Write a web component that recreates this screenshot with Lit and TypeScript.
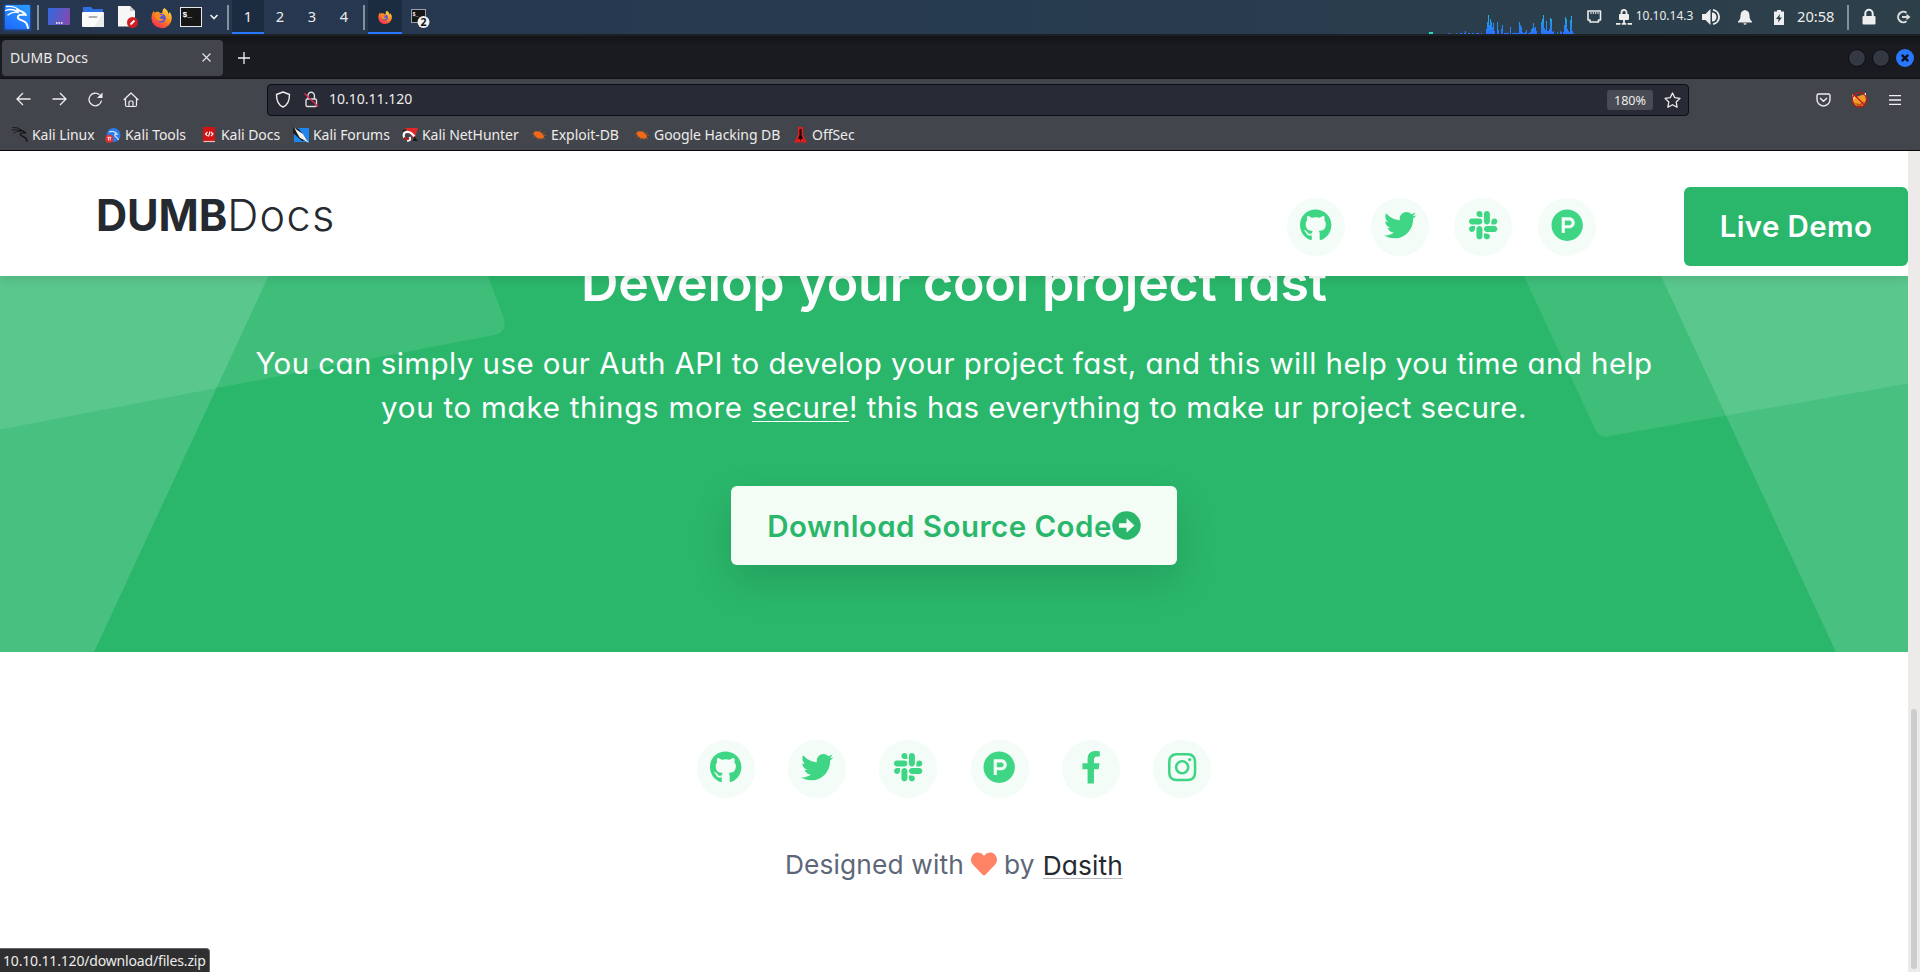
import { LitElement, html, css, svg } from "lit";
import { customElement } from "lit/decorators.js";

const GLYPHS: Record<string, { w: number; d: string }> = {
  github: { w: 496, d: "M165.9 397.4c0 2-2.3 3.6-5.2 3.6-3.3.3-5.6-1.3-5.6-3.6 0-2 2.3-3.6 5.2-3.6 3-.3 5.6 1.3 5.6 3.6zm-31.1-4.5c-.7 2 1.3 4.3 4.3 4.9 2.6 1 5.6 0 6.2-2s-1.3-4.3-4.3-5.2c-2.6-.7-5.5.3-6.2 2.3zm44.2-1.7c-2.9.7-4.9 2.6-4.6 4.9.3 2 2.9 3.3 5.9 2.6 2.9-.7 4.9-2.6 4.6-4.6-.3-1.9-3-3.2-5.9-2.9zM244.8 8C106.1 8 0 113.3 0 252c0 110.9 69.8 205.8 169.5 239.2 12.8 2.3 17.3-5.6 17.3-12.1 0-6.2-.3-40.4-.3-61.4 0 0-70 15-84.7-29.8 0 0-11.4-29.1-27.8-36.6 0 0-22.9-15.7 1.6-15.4 0 0 24.9 2 38.6 25.8 21.9 38.6 58.6 27.5 72.9 20.9 2.3-16 8.8-27.1 16-33.7-55.9-6.2-112.3-14.3-112.3-110.5 0-27.5 7.6-41.3 23.6-58.9-2.6-6.5-11.1-33.3 2.6-67.9 20.9-6.5 69 27 69 27 20-5.6 41.5-8.5 62.8-8.5s42.8 2.9 62.8 8.5c0 0 48.1-33.6 69-27 13.7 34.7 5.2 61.4 2.6 67.9 16 17.7 25.8 31.5 25.8 58.9 0 96.5-58.9 104.2-114.8 110.5 9.2 7.9 17 22.9 17 46.4 0 33.7-.3 75.4-.3 83.6 0 6.5 4.6 14.4 17.3 12.1C428.2 457.8 496 362.9 496 252 496 113.3 383.5 8 244.8 8z" },
  twitter: { w: 512, d: "M459.37 151.716c.325 4.548.325 9.097.325 13.645 0 138.72-105.583 298.558-298.558 298.558-59.452 0-114.68-17.219-161.137-47.106 8.447.974 16.568 1.299 25.34 1.299 49.055 0 94.213-16.568 130.274-44.832-46.132-.975-84.792-31.188-98.112-72.772 6.498.974 12.995 1.624 19.818 1.624 9.421 0 18.843-1.3 27.614-3.573-48.081-9.747-84.143-51.98-84.143-102.985v-1.299c13.969 7.797 30.214 12.67 47.431 13.319-28.264-18.843-46.781-51.005-46.781-87.391 0-19.492 5.197-37.36 14.294-52.954 51.655 63.675 129.3 105.258 216.365 109.807-1.624-7.797-2.599-15.918-2.599-24.04 0-57.828 46.782-104.934 104.934-104.934 30.213 0 57.502 12.67 76.67 33.137 23.715-4.548 46.456-13.32 66.599-25.34-7.798 24.366-24.366 44.833-46.132 57.827 21.117-2.273 41.584-8.122 60.426-16.243-14.292 20.791-32.161 39.308-52.628 54.253z" },
  slack: { w: 448, d: "M94.12 315.1c0 25.9-21.16 47.06-47.06 47.06S0 341 0 315.1c0-25.9 21.16-47.06 47.06-47.06h47.06v47.06zm23.72 0c0-25.9 21.16-47.06 47.06-47.06s47.06 21.16 47.06 47.06v117.84c0 25.9-21.16 47.06-47.06 47.06s-47.06-21.16-47.06-47.06V315.1zm47.06-188.98c-25.9 0-47.06-21.16-47.06-47.06S139 32 164.9 32s47.06 21.16 47.06 47.06v47.06H164.9zm0 23.72c25.9 0 47.06 21.16 47.06 47.06s-21.16 47.06-47.06 47.06H47.06C21.16 243.96 0 222.8 0 196.9s21.16-47.06 47.06-47.06H164.9zm188.98 47.06c0-25.9 21.16-47.06 47.06-47.06 25.9 0 47.06 21.16 47.06 47.06s-21.16 47.06-47.06 47.06h-47.06V196.9zm-23.72 0c0 25.9-21.16 47.06-47.06 47.06-25.9 0-47.06-21.16-47.06-47.06V79.06c0-25.9 21.16-47.06 47.06-47.06 25.9 0 47.06 21.16 47.06 47.06V196.9zM283.1 385.88c25.9 0 47.06 21.16 47.06 47.06 0 25.9-21.16 47.06-47.06 47.06-25.9 0-47.06-21.16-47.06-47.06v-47.06h47.06zm0-23.72c-25.9 0-47.06-21.16-47.06-47.06 0-25.9 21.16-47.06 47.06-47.06h117.84c25.9 0 47.06 21.16 47.06 47.06 0 25.9-21.16 47.06-47.06 47.06H283.1z" },
  producthunt: { w: 512, d: "M326.3 218.8c0 20.5-16.7 37.2-37.2 37.2h-70.3v-74.4h70.3c20.5 0 37.2 16.7 37.2 37.2zM504 256c0 137-111 248-248 248S8 393 8 256 119 8 256 8s248 111 248 248zm-128.1-37.2c0-47.9-38.9-86.8-86.8-86.8H169.2v248h49.6v-74.4h70.3c47.9 0 86.8-38.9 86.8-86.8z" },
  facebook: { w: 320, d: "M279.14 288l14.22-92.66h-88.91v-60.13c0-25.35 12.42-50.06 52.24-50.06h40.42V6.26S260.43 0 225.36 0c-73.22 0-121.08 44.38-121.08 124.72v70.62H22.89V288h81.39v224h100.17V288z" },
  instagram: { w: 448, d: "M224.1 141c-63.6 0-114.9 51.3-114.9 114.9s51.3 114.9 114.9 114.9S339 319.5 339 255.9 287.7 141 224.1 141zm0 189.6c-41.1 0-74.7-33.5-74.7-74.7s33.5-74.7 74.7-74.7 74.7 33.5 74.7 74.7-33.6 74.7-74.7 74.7zm146.4-194.3c0 14.9-12 26.8-26.8 26.8-14.9 0-26.8-12-26.8-26.8s12-26.8 26.8-26.8 26.8 12 26.8 26.8zm76.1 27.2c-1.7-35.9-9.9-67.7-36.2-93.9-26.2-26.2-58-34.4-93.9-36.2-37-2.1-147.9-2.1-184.9 0-35.8 1.7-67.6 9.9-93.9 36.1s-34.4 58-36.2 93.9c-2.1 37-2.1 147.9 0 184.9 1.7 35.9 9.9 67.7 36.2 93.9s58 34.4 93.9 36.2c37 2.1 147.9 2.1 184.9 0 35.9-1.7 67.7-9.9 93.9-36.2 26.2-26.2 34.4-58 36.2-93.9 2.1-37 2.1-147.8 0-184.8zM398.8 388c-7.8 19.6-22.9 34.7-42.6 42.6-29.5 11.7-99.5 9-132.1 9s-102.7 2.6-132.1-9c-19.6-7.8-34.7-22.9-42.6-42.6-11.7-29.5-9-99.5-9-132.1s-2.6-102.7 9-132.1c7.8-19.6 22.9-34.7 42.6-42.6 29.5-11.7 99.5-9 132.1-9s102.7-2.6 132.1 9c19.6 7.8 34.7 22.9 42.6 42.6 11.7 29.5 9 99.5 9 132.1s2.7 102.7-9 132.1z" },
};

const social = (name: string) => {
  const g = GLYPHS[name];
  return html`<a class="social"><svg width=${(32.4 * g.w) / 512} height="32.4" viewBox="0 0 ${g.w} 512"><path fill="#3ed684" d=${g.d}></path></svg></a>`;
};

const DRAGON = svg`<g fill="none" stroke-linecap="round" stroke-linejoin="round"><path d="M2 2.500C7 2 11.500 3 14.500 6M1 6.500C5 4.800 9.500 5.500 13.500 7.800M3.500 11C7 8 10.500 7.800 14 8.500" stroke-width="1.300"/><path d="M12.500 6C16 6.800 19 7.600 21.500 11L19.500 10.500L17 10.700C13 10.800 12.300 13.800 15 15.300C19 17.300 22.500 17 23.500 24" stroke-width="1.900"/></g>`;

const DRAGON_LOGO = html`<svg width="28" height="28" viewBox="0 0 28 28">
  <defs><filter id="glow" x="-30%" y="-30%" width="160%" height="160%"><feGaussianBlur stdDeviation="1.3"></feGaussianBlur></filter>
  <linearGradient id="kl" x1="0" y1="1" x2="0.6" y2="0"><stop offset="0" stop-color="#1f68ff"></stop><stop offset="1" stop-color="#2a96ff"></stop></linearGradient></defs>
  <rect x="1.5" y="2" width="26" height="25" fill="#1c6cf5" filter="url(#glow)" opacity=".8"></rect>
  <rect x="2" y="2" width="25" height="24" rx="1" fill="url(#kl)"></rect>
  <g stroke="#fff" transform="translate(1.5 1)">${DRAGON}</g></svg>`;

const firefox = (s: number, id: string) => html`<svg width=${s} height=${s} viewBox="0 0 22 22">
  <defs><linearGradient id=${id} x1=".85" y1=".05" x2=".25" y2="1"><stop offset="0" stop-color="#ffe14a"></stop><stop offset=".45" stop-color="#ff8a1f"></stop><stop offset="1" stop-color="#f5264e"></stop></linearGradient></defs>
  <path fill="url(#${id})" d="M14 1c3 2 4 4 4 6 1 0 1.400-1 1.400-2C21 7 22 9.500 21.700 12.300A10.600 10 0 0 1 .5 12C.5 8.500 1.500 6 3 4c.1 1 .4 1.500.8 2C5 5 6.500 5 8 5.200 9.500 5.200 9 6.200 9 6.200c1 .1 1.700.2 2.800.1C11.800 4 12.500 2 14 1z"/>
  <circle cx="10.800" cy="11.700" r="4.700" fill="#5b58d8"/>
  <path fill="#ff8b20" d="M4 7.500C6 6 8 6.500 9.500 8.300L12.500 8.500C12 10 10.500 10 9 10.500C9.500 12.500 11.500 13 13.500 12.300C12 15.500 7.500 15.500 6 12.500C5.200 11 5 9 4 7.500z"/></svg>`;

const BARS: [number, number][] = [[144,1],[150,1],[168,1],[180,1],[183,1],[192,1],[195,3],[204,1],[207,1],[216,1],[219,1],[228,1],[231,1],[234,1],[243,1],[258,5],[261,12],[264,19],[267,9],[270,15],[273,12],[276,7],[279,11],[282,3],[291,12],[294,4],[303,5],[306,9],[312,1],[315,1],[318,1],[321,1],[324,1],[330,7],[336,1],[339,1],[342,1],[345,1],[348,1],[351,1],[354,1],[357,12],[360,9],[363,7],[366,2],[369,1],[372,1],[375,2],[378,4],[384,1],[387,1],[390,2],[393,5],[396,6],[399,11],[402,6],[405,7],[408,3],[423,12],[426,15],[429,19],[432,6],[435,4],[438,13],[441,3],[444,3],[447,5],[450,16],[453,15],[456,2],[459,3],[471,2],[480,3],[483,2],[489,2],[492,9],[495,17],[498,15],[501,5],[504,3],[507,2],[510,14],[513,18],[516,3],[519,1]];

const bug = svg`<path fill="#f06818" d="M2.500 5.500Q6 3 10 5.500Q13 7.500 13 10.500Q10 12.500 6.500 11Q3 9 2.500 5.500z"/><path stroke="#b8602a" stroke-width=".7" fill="none" d="M5 5L3.500 3.500M9 5L9.500 3.500M11.500 6.500L13.500 5.500M13 8.500L15 8M12 11L14 12M7 11L6 12.500M5 9.500L2.500 10.500M3 7.500L1 7M10 11.500L11 13"/>`;

const BOOKMARKS = [
  { t: "Kali Linux", i: svg`<g stroke="#121212" transform="translate(-.5 -1) scale(.66 .64)">${DRAGON}</g>` },
  { t: "Kali Tools", i: svg`<circle cx="8.500" cy="8" r="7" fill="#2b7ce8"/><path d="M4 5Q9 3 12 7Q8 7 11 10Q13 11 13.500 13" stroke="#cfe4ff" stroke-width="1.300" fill="none"/><circle cx="4.300" cy="11.700" r="4" fill="#e03030"/><path d="M2.300 10.300H6.300M3.500 10.300V13.500M5.200 10.300V13.500" stroke="#fff" stroke-width=".8"/>` },
  { t: "Kali Docs", i: svg`<rect x="2" y="0" width="12" height="15" rx="1" fill="#d31212"/><path d="M2.500 14.500H14" stroke="#e8c0c0" stroke-width="1.200"/><path d="M6.500 5L4.500 7L6.500 9M10 5L12 7L10 9M9 4.500L7.500 9.500" stroke="#fff" stroke-width="1.100" fill="none"/>` },
  { t: "Kali Forums", i: svg`<rect x="1" y="1" width="15" height="14" fill="#1f86ee"/><path fill="#1c1c1c" d="M0 0L6 2L14 13L9 14L0 6z"/><path fill="#f4f4f4" d="M1 0L4 3L10 7L13 12L16 16L11 13L7 11L4 6z"/>` },
  { t: "Kali NetHunter", i: svg`<path d="M2 1H16L12 13L9 8z" fill="#e02828"/><path d="M2.200 11Q0 4.500 6.500 5Q9.500 5.500 12.500 9.500M5 13.500Q9.500 14 7.500 10" stroke="#fff" stroke-width="2.200" fill="none"/><path d="M2 10.500Q4.500 14 7 11" stroke="#c41c1c" stroke-width="1.800" fill="none"/><path d="M0 4L5 1L2 4.500zM12 9L16 14L11 14z" fill="#181818"/>` },
  { t: "Exploit-DB", i: bug },
  { t: "Google Hacking DB", i: bug },
  { t: "OffSec", i: svg`<path fill="#e01c1c" d="M6 0H11V8L15 15.500H2L6 8z"/><path fill="#1a0606" d="M7.500 2H9.500V8L11 12H9L8.500 15L8 12H6L7.500 8z"/>` },
];

@customElement("app-root")
export class AppRoot extends LitElement {
  static styles = css`
    :host { display: flex; flex-direction: column; position: relative; width: 1920px; height: 972px; overflow: hidden; background: #fff; font: 14px/20px "Noto Sans", sans-serif; color: #ececea; }
    * { box-sizing: border-box; }
    svg { display: block; flex: none; overflow: visible; }
    .panel { display: flex; justify-content: space-between; height: 34px; flex: none; background: linear-gradient(90deg, #26364f, #273b50 50%, #2d404a); }
    .launch { display: grid; grid-template-columns: 34px 8px repeat(4, 34px) 26px 20px 8px repeat(4, 32px) 8px 34px 34px; align-items: center; justify-items: center; height: 34px; }
    .tray { display: grid; grid-template-columns: 150px 34px 26px 57px repeat(3, 34px) 49px 6px 36px 33px; align-items: center; justify-items: center; height: 34px; }
    .start { justify-self: start; }
    .sep { width: 2px; height: 25px; background: #86909b; }
    .ws { font-size: 14.67px; }
    .ws, .task { display: flex; align-items: center; justify-content: center; width: 100%; height: 34px; border-bottom: 2px solid transparent; }
    .task { padding-top: 1px; }
    .last { padding: 3px 0 0 2px; }
    .on { background: #1c2c40; border-color: #2777ff; }
    .ip { font-size: 12px; line-height: 16px; margin: 0 2px 2px 0; }
    .doc { margin-left: 2px; }
    .clock { font-size: 14.67px; margin-bottom: 2px; padding-left: 1px; }
    .tabs { display: flex; align-items: center; height: 45px; flex: none; padding: 1px 6px 0 2px; background: linear-gradient(#131417, #1a1b20 10px); border-top: 2px solid #1d2126; border-bottom: 1px solid #101013; }
    .tab { display: flex; align-items: center; justify-content: space-between; width: 221px; height: 36px; border-radius: 4px; background: #43454c; padding: 0 12px 0 8px; }
    .plus { margin-left: 15px; }
    .win { display: flex; align-items: center; gap: 6px; margin-left: auto; }
    .dot { width: 18px; height: 18px; border-radius: 50%; background: #343843; border: 1px solid #0b0b0e; }
    .bar { display: flex; align-items: center; height: 41px; flex: none; background: #43454c; }
    .navicons { display: grid; grid-template-columns: repeat(4, 36px); justify-items: center; width: 261px; padding-left: 5px; margin-right: 6px; }
    .url { display: flex; align-items: center; width: 1422px; height: 32px; border: 1px solid #0d0e12; border-radius: 4px; background: #282a35; padding: 0 7px; }
    .addr { margin-bottom: 1px; }
    .lock { margin: 0 10px 0 12px; }
    .zoom { margin: 0 11px 0 auto; width: 46px; height: 20px; border-radius: 3px; background: #484a54; font-size: 12.6px; text-align: center; line-height: 21px; }
    .ext { display: grid; grid-template-columns: repeat(3, 36px); justify-items: center; align-items: center; margin-left: 116px; }
    .marks { display: grid; grid-template-columns: 93px 96px 92px 109px 129px 103px 158px 100px; align-items: center; height: 31px; flex: none; padding: 0 0 1px 12px; background: #43454c; border-bottom: 1px solid #08080a; }
    .mark { display: flex; align-items: center; gap: 4px; white-space: nowrap; letter-spacing: -0.05px; }
    .view { display: flex; height: 821px; flex: none; }
    .page { width: 1908px; display: flex; flex-direction: column; font-family: Inter, sans-serif; font-feature-settings: "cv11"; }
    .scroll { width: 12px; background: #edebea; padding: 558px 3px 3px; }
    .thumb { height: 260px; border-radius: 3px; background: #cdcdcd; }
    .head { display: flex; align-items: flex-start; height: 125px; flex: none; background: #fff; padding-left: 96px; position: relative; z-index: 1; box-shadow: 0 3px 10px rgba(0,0,0,.1); clip-path: inset(0 0 -20px 0); }
    .logo { font-size: 43.2px; line-height: 56px; font-weight: 700; color: #252930; margin: 36px auto 0 0; letter-spacing: -0.1px; }
    .thin { font-weight: 300; letter-spacing: 1.3px; }
    .socials { display: flex; gap: 25.4px; margin: 47px 88px 0 0; }
    .social { display: flex; align-items: center; justify-content: center; width: 58.2px; height: 58.2px; border-radius: 50%; background: #f3fcf6; padding-bottom: 4px; }
    .demo { width: 224px; height: 79px; margin-top: 36px; border-radius: 6px; background: #2ab76b; color: #fff; font-weight: 600; font-size: 29.5px; line-height: 79px; text-align: center; letter-spacing: .35px; }
    .hero { display: flex; flex-direction: column; align-items: center; height: 376px; flex: none; background: #2ab76b; position: relative; overflow: hidden; color: #fff; }
    .shapes { position: absolute; inset: 0; }
    .title { position: relative; margin-top: -24px; font-size: 51.84px; line-height: 62px; font-weight: 600; letter-spacing: -0.18px; }
    .lead { position: relative; margin-top: 27px; font-size: 29.5px; line-height: 44px; text-align: center; white-space: nowrap; letter-spacing: .44px; }
    .a { letter-spacing: .74px; }
    .u { border-bottom: 1px solid #fff; display: inline-block; line-height: 28px; letter-spacing: .4px; }
    .download { position: relative; display: flex; align-items: center; justify-content: center; width: 446px; height: 79px; margin-top: 57px; border-radius: 6px; background: #f4fcf6; color: #2ab76b; font-size: 29.5px; font-weight: 600; letter-spacing: .46px; box-shadow: 0 16px 40px rgba(0,0,0,.13); }
    .foot { display: flex; flex-direction: column; align-items: center; padding-top: 88px; color: #5d6778; }
    .row { display: flex; gap: 33.1px; }
    .credit { display: flex; align-items: center; margin-top: 47px; font-size: 26.3px; line-height: 40px; letter-spacing: .15px; }
    .heart { margin: 0 7px 2px 7px; }
    .name { color: #252930; border-bottom: 1px solid #b9bcc0; line-height: 25px; margin: 1px 0 0 8px; }
    .status { position: absolute; left: 0; bottom: 0; width: 210px; height: 24px; padding-left: 3px; background: #2f2f31; border: 1px solid #66666a; border-width: 1px 1px 0 0; border-radius: 0 4px 0 0; line-height: 24px; letter-spacing: -0.17px; white-space: nowrap; }
  `;

  render() {
    return html`
      <div class="panel">
        <div class="launch">
          ${DRAGON_LOGO}
          <i class="sep"></i>
          <svg width="22" height="18" viewBox="0 0 22 18"><defs><linearGradient id="dk" x1="0" y1="0" x2="1" y2=".3"><stop offset="0" stop-color="#2f6ce0"></stop><stop offset="1" stop-color="#7c4cb4"></stop></linearGradient></defs><rect width="22" height="17" rx="1" fill="url(#dk)"/><path d="M8 15h1.500M10.500 15H12M13 15h1.500" stroke="#fff" stroke-width="1.300"/></svg>
          <svg width="22" height="20" viewBox="0 0 22 20"><path fill="#2f6fe4" d="M1 0h8l2 2h10v6H1z"/><rect y="5" width="22" height="15" rx="1" fill="#fafafa"/><path fill="#e6e6e6" d="M22 5v15H12z" opacity=".7"/><rect x="6.500" y="9" width="9" height="2" rx="1" fill="#b0aeac"/></svg>
          <svg class="doc" width="20" height="22" viewBox="0 0 20 22"><path fill="#f7f7f5" d="M0 0h12l5 5v15.500H0z"/><path fill="#ccc" d="M12 0l5 5h-5z"/><circle cx="14.500" cy="16.500" r="5.500" fill="#cf1f22"/><path d="M12.500 18.500l4-4" stroke="#fff" stroke-width="1.800"/></svg>
          ${firefox(21, "fa")}
          <svg width="22" height="20" viewBox="0 0 22 20"><rect x=".5" y=".5" width="21" height="19" fill="#161616" stroke="#e8e8e8"/><text x="2.500" y="9.500" font-family="Liberation Mono, monospace" font-weight="700" font-size="8" fill="#fff">$_</text></svg>
          <svg width="8" height="6" viewBox="0 0 8 6"><path d="M.5 1L4 4.500L7.500 1" fill="none" stroke="#eee" stroke-width="1.600"/></svg>
          <i class="sep"></i>
          <span class="ws on">1</span><span class="ws">2</span><span class="ws">3</span><span class="ws">4</span>
          <i class="sep"></i>
          <span class="task on">${firefox(14, "fb")}</span>
          <span class="task last"><svg width="18" height="18" viewBox="0 0 18 18"><rect x=".5" y=".5" width="14" height="13" fill="#161616" stroke="#9aa3ad"/><text x="1.500" y="6.500" font-family="Liberation Mono, monospace" font-weight="700" font-size="5" fill="#fff">$_</text><circle cx="12.500" cy="13" r="6" fill="#f2f2f2"/><text x="12.500" y="16.800" text-anchor="middle" font-family="Noto Sans" font-weight="700" font-size="10.500" fill="#111">2</text></svg></span>
        </div>
        <div class="tray">
          <svg width="150" height="34" viewBox="0 0 150 34"><defs><linearGradient id="gr" gradientUnits="userSpaceOnUse" x1="0" y1="14" x2="0" y2="34"><stop offset="0" stop-color="#19c3d8"></stop><stop offset=".5" stop-color="#2490f0"></stop><stop offset="1" stop-color="#2b70ff"></stop></linearGradient></defs>
            <rect x="2" y="32" width="4" height="2" fill="#1fe0bd"/>${BARS.map(([x, h]) => svg`<rect x=${x / 3 - 27} y=${34 - h} width="1" height=${h} fill="url(#gr)"/>`)}</svg>
          <svg width="15" height="14" viewBox="0 0 15 14"><path d="M1 1h12.500v9h-2v2H3v-2H1z" fill="none" stroke="#eee" stroke-width="1.600" stroke-linejoin="round"/><path d="M4 2v2M6.300 2v2M8.700 2v2M11 2v2" stroke="#eee" stroke-width="1"/></svg>
          <svg width="16" height="16" viewBox="0 0 16 16"><rect x="3" y="5" width="10" height="6" rx="1" fill="#eee"/><path d="M5.500 5.500V3.500a2.500 2.500 0 0 1 5 0v2M8 11v3M0 14.800h4.500M5.800 14.800h4.400M11.500 14.800H16" fill="none" stroke="#eee" stroke-width="1.800"/></svg>
          <span class="ip">10.10.14.3</span>
          <svg width="18" height="16" viewBox="0 0 18 16"><path fill="#eee" d="M0 5h3.500L8.500 0v16l-5-5H0z"/><path fill="#eee" d="M10 3.500a4.500 4.500 0 0 1 0 9z"/><path d="M11 .9a7.200 7.200 0 0 1 0 14.200" fill="none" stroke="#eee" stroke-width="1.900"/></svg>
          <svg width="14" height="15" viewBox="0 0 14 15"><path fill="#eee" d="M7 0c3 .6 4.500 2.500 4.500 5.500 0 3.500 1 4.500 2.500 6V12.500H0V11.500c1.500-1.500 2.500-2.500 2.500-6C2.500 2.500 4 .6 7 0zM5.500 13.300h3Q8.500 14.800 7 14.800T5.500 13.300z"/></svg>
          <svg width="10" height="15" viewBox="0 0 10 15"><path fill="#eee" d="M3 0h4v1.500h3V15H0V1.500h3z"/><path fill="#2d404a" d="M6 4L2 9h2.500L4 12.500 8 7.500H5.500z"/></svg>
          <span class="clock start">20:58</span>
          <i class="sep"></i>
          <svg width="14" height="16" viewBox="0 0 14 16"><rect x=".5" y="7" width="13" height="8.500" rx="1" fill="#eee"/><path d="M3.300 8V4.500a3.700 3.700 0 0 1 7.400 0V8" fill="none" stroke="#eee" stroke-width="2"/></svg>
          <svg width="15" height="14" viewBox="0 0 15 14"><path d="M10.500 2.700a5.300 5.300 0 1 0 0 8.600" fill="none" stroke="#ddd" stroke-width="2"/><path fill="#ddd" d="M6 6.100h4.500V3.800L14.500 7l-4 3.200V7.900H6z"/></svg>
        </div>
      </div>
      <div class="tabs">
        <div class="tab"><span>DUMB Docs</span><svg width="9" height="9" viewBox="0 0 9 9"><path d="M.5.5l8 8M8.500.5l-8 8" stroke="#e6e6e6" stroke-width="1.100"/></svg></div>
        <svg class="plus" width="12" height="12" viewBox="0 0 12 12"><path d="M6 0v12M0 6h12" stroke="#f2f2f2" stroke-width="1.300"/></svg>
        <div class="win"><i class="dot"></i><i class="dot"></i><svg width="18" height="18" viewBox="0 0 18 18"><circle cx="9" cy="9" r="9" fill="#2777ff"/><path d="M5.800 5.800l6.400 6.400M12.200 5.800l-6.400 6.400" stroke="#0c1020" stroke-width="2.400"/></svg></div>
      </div>
      <div class="bar">
        <div class="navicons">
          <svg width="15" height="14" viewBox="0 0 15 14"><path d="M14.500 7H1M7 1L1 7l6 6" fill="none" stroke="#eee" stroke-width="1.300"/></svg>
          <svg width="15" height="14" viewBox="0 0 15 14"><path d="M.5 7H14M8 1l6 6-6 6" fill="none" stroke="#eee" stroke-width="1.300"/></svg>
          <svg width="15" height="15" viewBox="0 0 15 15"><path d="M11.500 2.800A6.300 6.300 0 1 0 13.500 8.500" fill="none" stroke="#eee" stroke-width="1.300"/><path fill="#eee" d="M14.500.5v5.500H9z"/></svg>
          <svg width="16" height="16" viewBox="0 0 16 16"><path d="M.7 8L8 1l7.300 7M2.500 6.500V13a1.500 1.500 0 0 0 1.500 1.500h8a1.500 1.500 0 0 0 1.500-1.500V6.500M6 14.500V10a1 1 0 0 1 1-1h2a1 1 0 0 1 1 1v4.500" fill="none" stroke="#eee" stroke-width="1.200" stroke-linejoin="round"/></svg>
        </div>
        <div class="url">
          <svg width="16" height="17" viewBox="0 0 16 17"><path d="M8 1L14.500 3.500C14.500 10 13 14 8 16C3 14 1.500 10 1.500 3.500z" fill="none" stroke="#eee" stroke-width="1.400" stroke-linejoin="round"/></svg>
          <svg class="lock" width="16" height="17" viewBox="0 0 16 17"><rect x="3" y="8" width="10.500" height="7.500" rx="1.500" fill="none" stroke="#ddd" stroke-width="1.400"/><path d="M5 8V4.500a3.200 3.200 0 0 1 6.400 0V8" fill="none" stroke="#ddd" stroke-width="1.400"/><path d="M1.500 2.500L15 15.500" stroke="#e22850" stroke-width="1.400"/></svg>
          <span class="addr">10.10.11.120</span>
          <span class="zoom">180%</span>
          <svg width="17" height="16" viewBox="0 0 17 16"><path d="M8.500 1l2.300 4.700 5.200.7-3.800 3.600.9 5.200-4.600-2.500-4.600 2.500.9-5.200L1 6.400l5.200-.7z" fill="none" stroke="#eee" stroke-width="1.300" stroke-linejoin="round"/></svg>
        </div>
        <div class="ext">
          <svg width="15" height="14" viewBox="0 0 15 14"><path d="M2.500 1h10a1.500 1.500 0 0 1 1.500 1.500V6.500a6.500 6.500 0 0 1-13 0V2.500A1.500 1.500 0 0 1 2.500 1zM4 5l3.500 3.300L11 5" fill="none" stroke="#eee" stroke-width="1.400"/></svg>
          <svg width="17" height="16" viewBox="0 0 17 16"><path d="M1 2l4 3 6-2 4-2v7l-3 6H5L2 9z" fill="#f29a28"/><path d="M13 2l2-1v5zM2 3l2 3-2 2z" fill="#fff"/><path d="M4 11l5 1 4-3-2 5H6z" fill="#c85a10"/><circle cx="8.500" cy="8" r="7.300" fill="none" stroke="#c01818" stroke-width="1.300"/><path d="M3.500 3l10 10" stroke="#c01818" stroke-width="1.300"/></svg>
          <svg width="12" height="10" viewBox="0 0 12 10"><path d="M0 .7h12M0 5h12M0 9.300h12" stroke="#f2f2f2" stroke-width="1.300"/></svg>
        </div>
      </div>
      <div class="marks">${BOOKMARKS.map((b) => html`<div class="mark"><svg width="16" height="16" viewBox="0 0 16 16">${b.i}</svg><span>${b.t}</span></div>`)}</div>
      <div class="view">
        <div class="page">
          <header class="head">
            <div class="logo">DUMB<span class="thin">Docs</span></div>
            <div class="socials">${["github", "twitter", "slack", "producthunt"].map(social)}</div>
            <a class="demo">Live Demo</a>
          </header>
          <section class="hero">
            <svg class="shapes" width="1908" height="376" viewBox="0 0 1908 376">
              <path fill="#fff" fill-opacity=".145" d="M0 0H268.500L94 376H0zM1661 0H1908V376H1836z"/>
              <path fill="#fff" fill-opacity=".1" d="M0 0H488L504 43Q507 55 497 58.500L0 153.500z"/>
              <path fill="#fff" fill-opacity=".1" d="M1524 0H1908V107.500L1607 160.500Q1600 161.500 1596 155z"/>
            </svg>
            <div class="title">Develop your cool project fast</div>
            <div class="lead">You can simply use our Auth API to develop your project fast, and this will help you time and help<br><span class="a">you to make things more </span><span class="u">secure</span>! this has everything to make ur project secure.</div>
            <a class="download"><span>Download Source Code</span><svg width="29" height="29" viewBox="0 0 29 29"><circle cx="14.500" cy="14.500" r="14.200" fill="#2ab76b"/><path fill="#f4fcf6" d="M7 12.200h7.500V7.200L22.500 14.500l-8 7.300V16.800H7z"/></svg></a>
          </section>
          <footer class="foot">
            <div class="row">${["github", "twitter", "slack", "producthunt", "facebook", "instagram"].map(social)}</div>
            <div class="credit"><span>Designed with</span><svg class="heart" width="26" height="26" viewBox="0 0 512 512"><path fill="#ff8466" d="M462.3 62.6C407.5 15.9 326 24.3 275.7 76.2L256 96.5l-19.7-20.3C186.1 24.3 104.5 15.9 49.7 62.6c-62.8 53.6-66.1 149.8-9.9 207.9l193.5 199.8c12.5 12.9 32.8 12.9 45.3 0l193.500-199.800c56.300-58.100 53-154.300-9.800-207.900z"/></svg><span>by</span><span class="name">Dasith</span></div>
          </footer>
        </div>
        <div class="scroll"><div class="thumb"></div></div>
      </div>
      <div class="status">10.10.11.120/download/files.zip</div>
    `;
  }
}
